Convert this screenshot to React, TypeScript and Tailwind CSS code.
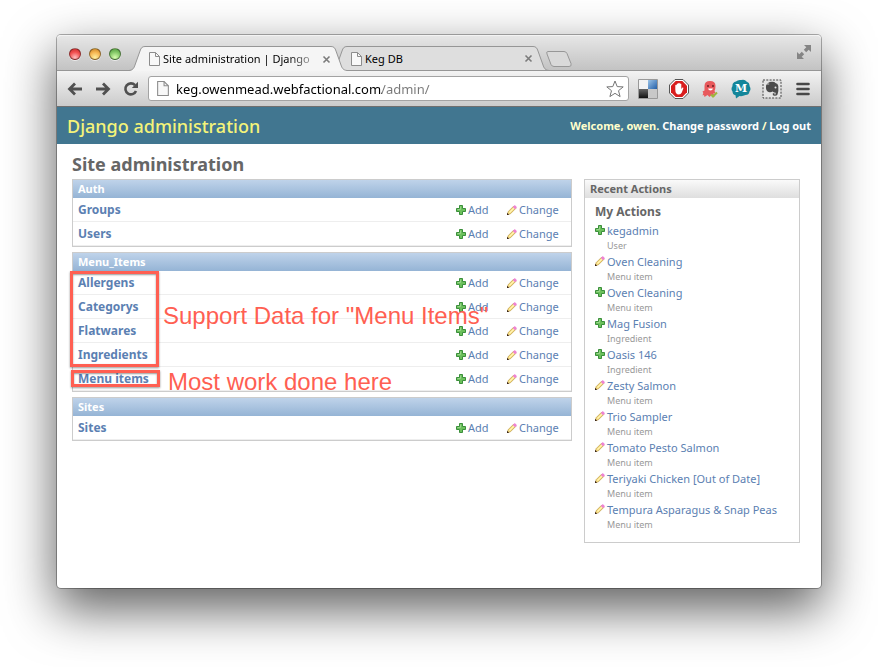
import type { ReactNode } from "react";

function AddIcon() {
  return (
    <svg className="block size-[10px] shrink-0" viewBox="0 0 10 10" aria-hidden="true">
      <path d="M3.5.5h3v3h3v3h-3v3h-3v-3h-3v-3h3z" fill="#6cc05c" stroke="#3b8f3b" />
      <path d="M4.5 1.5v3h-3" fill="none" stroke="#98d68a" />
    </svg>
  );
}

function ChangeIcon() {
  return (
    <svg className="block size-[10px] shrink-0" viewBox="0 0 10 10" aria-hidden="true">
      <path d="M1.200 6.600 6.600 1.200 8.800 3.400 3.400 8.800.5 9.500z" fill="#fbe58c" stroke="#b8923c" strokeWidth=".7" />
      <path d="M2.600 7.400 7.400 2.600" stroke="#fff6c8" strokeWidth=".8" />
      <path d="M5.800 2 7.800 0 10 2.200 8 4.200z" fill="#ee82d4" />
      <path d="M0 10V7.800L2.200 10z" fill="#3a2415" />
    </svg>
  );
}

function PageIcon({ className }: { className: string }) {
  return (
    <svg className={className} viewBox="0 0 11 14" aria-hidden="true">
      <path d="M.5.5h6l4 4v9H.5z" fill="#f8f8f8" stroke="#8c8c8c" />
      <path d="M6.500.5v4h4" fill="none" stroke="#8c8c8c" />
    </svg>
  );
}

function Light({ className }: { className: string }) {
  return (
    <button
      aria-label="Window control"
      className={`size-3 rounded-full border border-black/40 shadow-[0_1px_0_rgba(255,255,255,0.6)] ${className}`}
    />
  );
}

function Tab({ title, active }: { title: string; active?: boolean }) {
  const fill = active ? "#f5f5f5" : "#dedede";
  return (
    <div className={`relative flex h-[25px] w-[218px] ${active ? "z-10" : "-ml-4"}`}>
      <svg className="block h-[25px] w-4 shrink-0" viewBox="0 0 16 25" aria-hidden="true">
        <path d="M0 25C4 24.500 5 22 6 19L11 5C12 2 13 .5 16 .5V25z" fill={fill} />
        <path d="M0 24.500C4 24 5 22 6 19L11 5C12 2 13 .5 16 .5" fill="none" stroke="#969696" />
      </svg>
      <div
        className={`flex min-w-0 flex-1 items-center border-t border-[#969696] ${
          active ? "bg-[#f5f5f5]" : "border-b bg-[#dedede]"
        }`}
      >
        <PageIcon className="ml-1 h-[14px] w-[11px] shrink-0" />
        <button
          className={`ml-[3px] min-w-0 flex-1 text-left text-[11px] leading-4 whitespace-nowrap ${
            active
              ? "bg-[linear-gradient(to_right,#000_125px,#bbb_152px)] bg-clip-text text-transparent"
              : "text-black"
          }`}
        >
          {title}
        </button>
        <button aria-label={`Close ${title}`} className="ml-1 size-[9px] shrink-0">
          <svg viewBox="0 0 9 9" className="block size-[9px]">
            <path d="M1.500 1.500l6 6M7.500 1.500l-6 6" stroke="#7b7b7b" strokeWidth="1.600" />
          </svg>
        </button>
      </div>
      <svg className="block h-[25px] w-4 shrink-0" viewBox="0 0 16 25" aria-hidden="true">
        <path d="M16 25C12 24.500 11 22 10 19L5 5C4 2 3 .5 0 .5V25z" fill={fill} />
        <path d="M16 24.500C12 24 11 22 10 19L5 5C4 2 3 .5 0 .5" fill="none" stroke="#969696" />
        {!active && <path d="M0 24.500h16" stroke="#969696" />}
      </svg>
    </div>
  );
}

function TabStrip() {
  return (
    <div className="flex h-9 items-end rounded-t-[4px] border-t border-white/80 bg-linear-to-b from-[#e6e6e6] to-[#c2c2c2] shadow-[inset_0_-1px_0_#969696]">
      <div className="mb-[11px] ml-3 flex gap-2">
        <Light className="bg-[radial-gradient(circle_at_50%_85%,#ffc0c0,#f25050_55%,#c02828)]" />
        <Light className="bg-[radial-gradient(circle_at_50%_85%,#fff0a0,#f5b450_55%,#c07c20)]" />
        <Light className="bg-[radial-gradient(circle_at_50%_85%,#d8ffb0,#84c868_55%,#4a9438)]" />
      </div>
      <div className="ml-2 flex">
        <Tab title="Site administration | Django" active />
        <Tab title="Keg DB" />
      </div>
      <button aria-label="New tab" className="-ml-[3px] mb-1">
        <svg className="block h-4 w-[26px]" viewBox="0 0 26 16" aria-hidden="true">
          <path
            d="M2 .5h16q2 0 3 2l4 10q1 3-2 3H8q-2 0-3-2L1 3Q0 .5 2 .5z"
            fill="#d9d9d9"
            stroke="#979797"
          />
        </svg>
      </button>
      <button aria-label="Full screen" className="mr-[10px] mb-3 ml-auto">
        <svg className="block size-[14px]" viewBox="0 0 14 14" aria-hidden="true">
          <path
            d="M7 0h7v7l-2.300-2.300-2.500 2.500-2.400-2.400 2.500-2.500zM7 14H0V7l2.300 2.300 2.500-2.500 2.400 2.400-2.500 2.500z"
            fill="#858585"
          />
        </svg>
      </button>
    </div>
  );
}

function ToolButton({ label, children }: { label: string; children: ReactNode }) {
  return (
    <button aria-label={label} className="flex size-5 shrink-0 items-center justify-center">
      {children}
    </button>
  );
}

function Toolbar() {
  return (
    <div className="flex h-9 items-center border-b border-[#6f6f6f] bg-linear-to-b from-[#f3f3f3] to-[#cbcbcb] px-2">
      <div className="flex gap-2">
        <ToolButton label="Back">
          <svg viewBox="0 0 16 14" className="h-[14px] w-4">
            <path d="M8 1.500 2.500 7 8 12.500M3 7h12" fill="none" stroke="#505050" strokeWidth="2.800" />
          </svg>
        </ToolButton>
        <ToolButton label="Forward">
          <svg viewBox="0 0 16 14" className="h-[14px] w-4">
            <path d="M8 1.500 13.500 7 8 12.500M13 7H1" fill="none" stroke="#505050" strokeWidth="2.800" />
          </svg>
        </ToolButton>
        <ToolButton label="Reload">
          <svg viewBox="0 0 16 16" className="size-4">
            <path d="M12 4.200A5.500 5.500 0 1 0 13 10" fill="none" stroke="#505050" strokeWidth="2.600" />
            <path d="M15 .8V7H8.800z" fill="#505050" />
          </svg>
        </ToolButton>
      </div>
      <div className="ml-[7px] flex h-[25px] min-w-0 flex-1 items-center rounded-[3px] border border-[#a3a3a3] bg-white">
        <PageIcon className="ml-2 h-[15px] w-3 shrink-0" />
        <input
          aria-label="Address"
          defaultValue="keg.owenmead.webfactional.com/admin/"
          className="ml-[7px] h-5 min-w-0 flex-1 bg-[linear-gradient(to_right,#000_206px,#777_206px)] bg-clip-text text-[13px] leading-5 text-transparent outline-none"
        />
        <button aria-label="Bookmark" className="mr-1">
          <svg viewBox="0 0 18 18" className="block size-[18px]">
            <path
              d="M9 1l2.200 5.600 6 .3-4.700 3.800 1.600 5.900L9 13.300l-5.100 3.300 1.600-5.900L.8 6.900l6-.3z"
              fill="#fff"
              stroke="#757575"
              strokeLinejoin="round"
            />
          </svg>
        </button>
      </div>
      <div className="ml-[9px] flex gap-[11px]">
        <ToolButton label="Delicious">
          <svg viewBox="0 0 20 20" className="size-5">
            <defs>
              <linearGradient id="blue" x2="1" y2="1">
                <stop stopColor="#9cc4e8" />
                <stop offset="1" stopColor="#235fa8" />
              </linearGradient>
              <linearGradient id="dark" x2="0" y2="1">
                <stop stopColor="#666" />
                <stop offset="1" stopColor="#111" />
              </linearGradient>
            </defs>
            <path d="M.5.5h19v19H.5z" fill="#f3f3f3" stroke="#999" />
            <path d="M10 1h9v9h-9z" fill="url(#blue)" />
            <path d="M1 10h9v9H1z" fill="url(#dark)" />
            <path d="M10 10h9v9h-9z" fill="#c8c8c8" />
          </svg>
        </ToolButton>
        <ToolButton label="AdBlock">
          <svg viewBox="0 0 20 20" className="size-5">
            <path d="M6 .5h8L19.500 6v8L14 19.500H6L.5 14V6z" fill="#fff" stroke="#555" />
            <path d="M6.700 2h6.600L18 6.700v6.600L13.300 18H6.700L2 13.300V6.700z" fill="#d81e1e" />
            <path
              d="M6.300 10.500V6.200q.7-1 1.400 0V5q.8-1 1.500 0v-.7q.9-.9 1.600 0V5q.8-.9 1.500 0v5l1.200-1.400q1-.3.900.7L12.800 13.500q-1 2-3 2-3.500 0-3.500-5z"
              fill="#fff"
            />
          </svg>
        </ToolButton>
        <ToolButton label="Octopus">
          <svg viewBox="0 0 20 20" className="size-5">
            <path
              d="M4.500 7q0-5 5.500-5t5.500 5q0 3-1 5l1.500 3-2.500-1 1 4-3-2-2 2-2-2-3 2-.5-2-1.500.5.800-2.500-.8-1.500 2-1Q4.500 9 4.500 7z"
              fill="#e8595c"
            />
            <circle cx="8" cy="7" r="1" fill="#6b2025" />
            <circle cx="13" cy="7" r="1" fill="#6b2025" />
            <path d="M8 9.500h5q-.5 2-2.500 2T8 9.500z" fill="#fff" />
            <path d="M11 15.500l2 2 4-4" fill="none" stroke="#9cb83c" strokeWidth="2" />
          </svg>
        </ToolButton>
        <button
          aria-label="Mailto"
          className="relative flex size-5 shrink-0 items-center justify-center font-['DejaVu_Serif',serif] text-[11px] leading-4 font-bold text-white"
        >
          <svg viewBox="0 0 20 20" className="absolute size-5" aria-hidden="true">
            <path
              d="M5 2.500Q7 .5 10 1q4-1 5.500 1.500Q19 4 18.500 7q2 3 0 5.500Q18 16 14.500 16q-3 1.500-6 1L5 19.500l-.5-3.300Q1.500 15.500 1.500 12.500-.5 10 1.500 7 1 3.500 5 2.500z"
              fill="#13869a"
            />
          </svg>
          <span className="relative">M</span>
        </button>
        <ToolButton label="Clipper">
          <svg viewBox="0 0 20 20" className="size-5">
            <path d="M1 1h18v18H1z" fill="#e4e4e4" stroke="#444" strokeDasharray="2 1.300" />
            <path
              d="M4 6.500 7.500 3q5-.7 6 1 2.500.3 2.800 3 .5 5-.8 8.500-.8 1.500-3 1.300-2.200-.3-1.800-2.400l1.700-.3v1.300h1.200v-1.800q-2 .2-3-1.100-1.600 1.300-4 .5Q3.500 12 4 6.500z"
              fill="#4b4b4b"
            />
            <path d="M4 6h3.200V3z" fill="#888" />
            <circle cx="13.500" cy="8.500" r="1" fill="#e4e4e4" />
          </svg>
        </ToolButton>
        <ToolButton label="Menu">
          <svg viewBox="0 0 14 14" className="size-[14px]">
            <path d="M1.500 2h11M1.500 7h11M1.500 12h11" stroke="#484848" strokeWidth="2.600" strokeLinecap="round" />
          </svg>
        </ToolButton>
      </div>
    </div>
  );
}

const link = "text-[#5b80b2]";

function Module({ title, rows }: { title: string; rows: string[] }) {
  return (
    <div className="border border-[#ccc]">
      <table className="w-full border-separate border-spacing-0">
        <caption className="h-[18px] bg-linear-to-b from-[#bfd3ea] to-[#95b4d5] pl-[5px] text-left text-[11px] leading-[18px] font-bold text-white">
          {title}
        </caption>
        <tbody>
          {rows.map((row) => (
            <tr key={row}>
              <th scope="row" className="h-6 border-b border-[#eee] pl-[5px] text-left text-[12px] leading-5 font-bold">
                <a href="#" className={link}>
                  {row}
                </a>
              </th>
              <td className="w-[51px] border-b border-[#eee] text-[11px] leading-5">
                <a href="#" className={`flex items-center gap-[2px] ${link}`}>
                  <AddIcon />
                  Add
                </a>
              </td>
              <td className="w-16 border-b border-[#eee] text-[11px] leading-5">
                <a href="#" className={`flex items-center gap-[2px] ${link}`}>
                  <ChangeIcon />
                  Change
                </a>
              </td>
            </tr>
          ))}
        </tbody>
      </table>
    </div>
  );
}

const actions = [
  { name: "kegadmin", kind: "User", add: true },
  { name: "Oven Cleaning", kind: "Menu item", add: false },
  { name: "Oven Cleaning", kind: "Menu item", add: true },
  { name: "Mag Fusion", kind: "Ingredient", add: true },
  { name: "Oasis 146", kind: "Ingredient", add: true },
  { name: "Zesty Salmon", kind: "Menu item", add: false },
  { name: "Trio Sampler", kind: "Menu item", add: false },
  { name: "Tomato Pesto Salmon", kind: "Menu item", add: false },
  { name: "Teriyaki Chicken [Out of Date]", kind: "Menu item", add: false },
  { name: "Tempura Asparagus & Snap Peas", kind: "Menu item", add: false },
];

function RecentActions() {
  return (
    <aside className="w-[216px] shrink-0 border border-[#ccc] pb-[10px]">
      <h2 className="h-[18px] bg-linear-to-b from-[#fafafa] to-[#dedede] pl-[5px] text-[11px] leading-[18px] font-bold text-[#666]">
        Recent Actions
      </h2>
      <h3 className="mt-1 pl-[10px] text-[12px] leading-5 font-bold text-[#666]">My Actions</h3>
      <ul className="pl-[10px]">
        {actions.map((action, i) => (
          <li key={i} className="flex h-[31px] gap-[2px]">
            <div className="pt-[3px]">{action.add ? <AddIcon /> : <ChangeIcon />}</div>
            <div className="whitespace-nowrap">
              <a href="#" className={`block text-[11px] leading-[18px] ${link}`}>
                {action.name}
              </a>
              <span className="block text-[9px] leading-3 text-[#999]">{action.kind}</span>
            </div>
          </li>
        ))}
      </ul>
    </aside>
  );
}

function Note({ children }: { children: ReactNode }) {
  return (
    <span className="block font-['Liberation_Sans',Arial,sans-serif] text-[24px] leading-6 whitespace-nowrap text-[#ff5f52]">
      {children}
    </span>
  );
}

export default function App() {
  return (
    <main className="min-h-screen bg-white px-[57px] pt-[35px] pb-[79px] font-['Noto_Sans','Open_Sans',sans-serif]">
      <div className="rounded-[4px] bg-white shadow-[0_0_0_1px_rgba(0,0,0,0.3),0_20px_50px_2px_rgba(0,0,0,0.62)]">
        <TabStrip />
        <Toolbar />
        <header className="flex h-[37px] items-center justify-between bg-[#417690] px-[10px]">
          <h1 className="text-[18px] leading-6 font-medium text-[#f4f379]">Django administration</h1>
          <p className="text-[11px] leading-4 font-bold text-[#ffc]">
            Welcome, owen.{" "}
            <a href="#" className="text-white">
              Change password
            </a>{" "}
            /{" "}
            <a href="#" className="text-white">
              Log out
            </a>
          </p>
        </header>
        <div className="pt-2 pr-[21px] pb-[45px] pl-[15px]">
          <h2 className="h-[27px] text-[18px] leading-6 font-bold text-[#666]">Site administration</h2>
          <div className="flex items-start gap-3">
            <div className="flex min-w-0 flex-1 flex-col gap-[5px]">
              <Module title="Auth" rows={["Groups", "Users"]} />
              <div className="relative">
                <Module
                  title="Menu_Items"
                  rows={["Allergens", "Categorys", "Flatwares", "Ingredients", "Menu items"]}
                />
                <div className="absolute top-[19px] -left-0.5 flex items-center gap-1">
                  <div className="h-24 w-[89px] border-3 border-[#ff5f52] shadow-[0_1px_2px_rgba(0,0,0,0.4),inset_0_1px_2px_rgba(0,0,0,0.4)]" />
                  <div className="pb-1.5">
                    <Note>Support Data for "Menu Items"</Note>
                  </div>
                </div>
                <div className="absolute top-[118px] -left-px flex gap-2">
                  <div className="h-[17px] w-[89px] border-3 border-[#ff5f52] shadow-[0_1px_2px_rgba(0,0,0,0.4),inset_0_1px_2px_rgba(0,0,0,0.4)]" />
                  <Note>Most work done here</Note>
                </div>
              </div>
              <Module title="Sites" rows={["Sites"]} />
            </div>
            <RecentActions />
          </div>
        </div>
      </div>
    </main>
  );
}
